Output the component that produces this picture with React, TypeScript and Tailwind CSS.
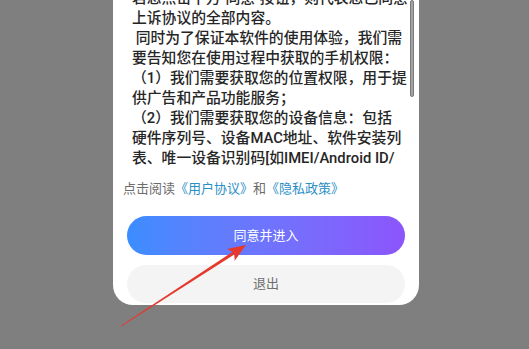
const bodyLines = [
  "若您点击下方\"同意\"按钮，则代表您已同意",
  "上诉协议的全部内容。",
  " 同时为了保证本软件的使用体验，我们需",
  "要告知您在使用过程中获取的手机权限：",
  "（1）我们需要获取您的位置权限，用于提",
  "供广告和产品功能服务；",
  "（2）我们需要获取您的设备信息：包括",
  "硬件序列号、设备MAC地址、软件安装列",
  "表、唯一设备识别码[如IMEI/Android ID/",
];

const Arrow = () => (
  <svg
    className="absolute left-0 top-0 pointer-events-none"
    width={529}
    height={349}
    viewBox="0 0 529 349"
  >
    <polygon
      fill="#e5392e"
      points="246,245 234.7,260.7 234.3,254.5 121.2,326.4 120.8,325.8 232.5,251.9 227.1,248.9"
    />
  </svg>
);

export default function App() {
  return (
    <div
      className="relative w-[529px] h-[349px] overflow-hidden bg-[#7f7f7f] flex items-start"
      style={{ fontFamily: 'Roboto, "Noto Sans CJK SC", sans-serif' }}
    >
      <div className="ml-[113px] w-[306px] h-[305px] bg-white rounded-b-[20px] flex flex-col relative">
        <div className="h-[170px] overflow-hidden pl-[19px]">
          <div className="-mt-[12px] text-[14.8px] leading-[20px] font-medium text-[#262626]">
            {bodyLines.map((line, i) => (
              <div key={i} className="whitespace-pre">
                {line}
              </div>
            ))}
          </div>
        </div>
        <div className="absolute left-[297px] top-0 w-[4px] h-[97px] rounded-full bg-[#a3a3a3] border border-[#7a7a7a]" />

        <div className="mt-[9px] pl-[10px] text-[13px] leading-[20px] text-[#6b6b6b]">
          点击阅读<span className="text-[#2b8fc6]">《用户协议》</span>和<span className="text-[#2b8fc6]">《隐私政策》</span>
        </div>

        <div className="mt-[17px] mx-[14px] h-[39px] rounded-full bg-gradient-to-r from-[#3a8dff] to-[#8b55fb] flex items-center justify-center text-white text-[13px]">
          同意并进入
        </div>
        <div className="mt-[10px] mx-[14px] h-[38px] rounded-full bg-[#f4f4f4] flex items-center justify-center text-[#6e6e6e] text-[13px]">
          退出
        </div>
      </div>
      <Arrow />
    </div>
  );
}
